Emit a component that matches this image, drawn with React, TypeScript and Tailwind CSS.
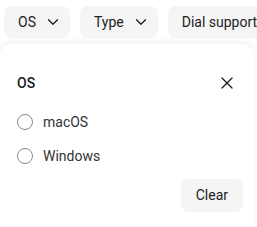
import React from 'react';
import { ChevronDown, X } from 'lucide-react';

const filters = ['OS', 'Type', 'Dial support'];
const options = ['macOS', 'Windows'];

export default function App() {
  return (
    <div className="w-[257px] h-[227px] overflow-hidden bg-white text-[#1a1a1a] flex flex-col" style={{ fontFamily: 'Roboto, "Noto Sans", sans-serif' }}>
      <div className="flex gap-[10px] pl-[4px] pt-[6px] whitespace-nowrap">
        {filters.map((f, i) => (
          <button
            key={f}
            className="h-[32px] shrink-0 flex items-center gap-[8px] pl-[14px] pr-[8px] rounded-[8px] bg-[#f5f5f5] text-[14px] text-[#222]"
          >
            <span>{f}</span>
            {i < 2 && <ChevronDown className="w-[18px] h-[18px]" strokeWidth={1.8} />}
          </button>
        ))}
      </div>

      <div className="flex-1 mt-[6px] w-[254px] rounded-t-[12px] bg-white shadow-[0_-2px_8px_rgba(0,0,0,0.06)] px-[17px] pt-[29px]">
        <div className="flex items-center justify-between h-[20px]">
          <span className="text-[14px] font-medium">OS</span>
          <X className="w-[20px] h-[20px]" strokeWidth={1.5} />
        </div>
        <div className="mt-[19px] flex flex-col gap-[14px]">
          {options.map((o) => (
            <label key={o} className="flex items-center gap-[10px] h-[20px] text-[14px] text-[#333]">
              <span className="w-[16px] h-[16px] rounded-full border border-[#8a8a8a] bg-white" />
              {o}
            </label>
          ))}
        </div>
        <div className="flex justify-end mt-[13px]">
          <button className="h-[33px] px-[15px] mr-[-6px] rounded-[8px] bg-[#f5f5f5] text-[14px] text-[#222]">Clear</button>
        </div>
      </div>
    </div>
  );
}
